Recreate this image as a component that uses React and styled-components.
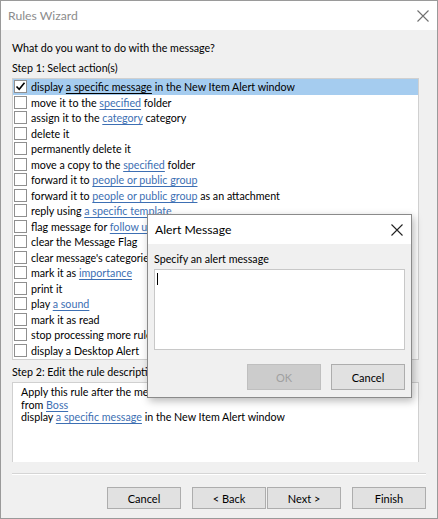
import styled, { createGlobalStyle } from "styled-components"

const GlobalStyle = createGlobalStyle`
  body {
    margin: 0;
    background: #ffffff;
    font-family: Lato, "Noto Sans", sans-serif;
  }
`

const Window = styled.div`
  position: relative;
  width: 438px;
  height: 519px;
  box-sizing: border-box;
  border: 1px solid #9a9a9a;
  background: #f0f0f0;
  display: flex;
  flex-direction: column;
  overflow: hidden;
  font-size: 10.7px;
  color: #000;
`

const TitleBar = styled.div`
  height: 29px;
  flex: none;
  background: #fff;
  display: flex;
  align-items: center;
  justify-content: space-between;
  padding: 0 8px 0 7px;
  font-size: 12.2px;
  color: ${p => (p.$active ? "#000" : "#8c8c8c")};
`

const CloseBtn = styled.svg`
  width: ${p => p.$size || 12}px;
  height: ${p => p.$size || 12}px;
  flex: none;
`

const Body = styled.div`
  flex: 1;
  display: flex;
  flex-direction: column;
  padding: 10px 11px 0 11px;
`

const Label = styled.div`
  height: 16px;
  line-height: 16px;
  margin-top: ${p => p.$mt || 0}px;
  white-space: nowrap;
`

const ListBox = styled.div`
  margin-top: 2px;
  margin-right: 7px;
  height: 282px;
  box-sizing: border-box;
  border: 1px solid #d0d0d0;
  background: #fff;
  display: flex;
  flex-direction: column;
`

const Row = styled.div`
  height: 15.5px;
  flex: none;
  display: flex;
  align-items: center;
  gap: 4px;
  padding-left: 1px;
  white-space: nowrap;
  background: ${p => (p.$selected ? "#a5ccef" : "transparent")};
`

const Box = styled.span`
  width: 13px;
  height: 13px;
  box-sizing: border-box;
  border: 1px solid #8f8f8f;
  background: #fff;
  flex: none;
  display: flex;
  align-items: center;
  justify-content: center;
`

const Link = styled.span`
  color: ${p => (p.$plain ? "#000" : "#3d6fb3")};
  text-decoration: underline;
  text-underline-offset: 1.5px;
`

const DescBox = styled.div`
  margin-top: 2px;
  margin-right: 7px;
  height: 80px;
  box-sizing: border-box;
  border: 1px solid #d0d0d0;
  border-bottom: none;
  background: #fff;
  padding: 3px 0 0 8px;
  line-height: 12.5px;
`

const Separator = styled.div`
  margin-top: 11px;
  height: 0;
  border-top: 1px solid #d5d5d5;
  border-bottom: 1px solid #fff;
`

const ButtonRow = styled.div`
  margin-top: 12px;
  display: flex;
  justify-content: flex-end;
`

const Button = styled.button`
  width: 74px;
  height: ${p => p.$h || 22}px;
  margin-left: ${p => p.$gap ?? 11}px;
  box-sizing: border-box;
  border: 1px solid ${p => (p.disabled ? "#bfbfbf" : "#adadad")};
  background: ${p => (p.disabled ? "#cccccc" : "#e1e1e1")};
  color: ${p => (p.disabled ? "#a0a0a0" : "#000")};
  font-family: inherit;
  font-size: 11px;
  padding: 0;
`

const Dialog = styled.div`
  position: absolute;
  left: 146px;
  top: 213px;
  width: 265px;
  height: 184px;
  box-sizing: border-box;
  border: 1px solid #8a8a8a;
  background: #f0f0f0;
  box-shadow: 2px 3px 8px rgba(0, 0, 0, 0.28);
  display: flex;
  flex-direction: column;
`

const DialogBody = styled.div`
  flex: 1;
  display: flex;
  flex-direction: column;
  padding: 7px 6px 0 6px;
`

const TextArea = styled.div`
  margin-top: 2px;
  height: 81px;
  box-sizing: border-box;
  border: 1px solid #c8c8c8;
  background: #fff;
  padding: 3px 0 0 2px;
`

const Caret = styled.div`
  width: 1px;
  height: 12px;
  background: #000;
`

const DialogButtons = styled.div`
  margin-top: 14px;
  display: flex;
  justify-content: flex-end;
`

const X = ({ size, color }) => (
  <CloseBtn $size={size} viewBox="0 0 12 12">
    <path d="M0.5 0.5 L11.5 11.5 M11.5 0.5 L0.5 11.5" stroke={color} strokeWidth="1.1" fill="none" />
  </CloseBtn>
)

const actions = [
  ["display ", ["a specific message"], " in the New Item Alert window"],
  ["move it to the ", ["specified"], " folder"],
  ["assign it to the ", ["category"], " category"],
  ["delete it"],
  ["permanently delete it"],
  ["move a copy to the ", ["specified"], " folder"],
  ["forward it to ", ["people or public group"]],
  ["forward it to ", ["people or public group"], " as an attachment"],
  ["reply using ", ["a specific template"]],
  ["flag message for ", ["follow up at this time"]],
  ["clear the Message Flag"],
  ["clear message's categories"],
  ["mark it as ", ["importance"]],
  ["print it"],
  ["play ", ["a sound"]],
  ["mark it as read"],
  ["stop processing more rules"],
  ["display a Desktop Alert"],
]

const renderParts = (parts, plain) =>
  parts.map((p, i) => (Array.isArray(p) ? <Link key={i} $plain={plain}>{p[0]}</Link> : <span key={i}>{p}</span>))

export default function App() {
  return (
    <>
      <GlobalStyle />
      <Window>
        <TitleBar>
          <span>Rules Wizard</span>
          <X size={12} color="#707070" />
        </TitleBar>
        <Body>
          <Label>What do you want to do with the message?</Label>
          <Label $mt={4}>Step 1: Select action(s)</Label>
          <ListBox>
            {actions.map((a, i) => (
              <Row key={i} $selected={i === 0}>
                <Box>
                  {i === 0 && (
                    <svg width="11" height="11" viewBox="0 0 11 11">
                      <path d="M1.5 5.5 L4.2 8.3 L9.5 1.8" stroke="#000" strokeWidth="1.6" fill="none" />
                    </svg>
                  )}
                </Box>
                <span>{renderParts(a, i === 0)}</span>
              </Row>
            ))}
          </ListBox>
          <Label $mt={4}>Step 2: Edit the rule description (click an underlined value)</Label>
          <DescBox>
            <div>Apply this rule after the message arrives</div>
            <div>from <Link>Boss</Link></div>
            <div>display <Link>a specific message</Link> in the New Item Alert window</div>
          </DescBox>
          <Separator />
          <ButtonRow>
            <Button>Cancel</Button>
            <Button>&lt; Back</Button>
            <Button $gap={1}>Next &gt;</Button>
            <Button>Finish</Button>
          </ButtonRow>
        </Body>
        <Dialog>
          <TitleBar $active>
            <span>Alert Message</span>
            <X size={12} color="#222" />
          </TitleBar>
          <DialogBody>
            <Label>Specify an alert message</Label>
            <TextArea>
              <Caret />
            </TextArea>
            <DialogButtons>
              <Button $h={26} disabled>OK</Button>
              <Button $h={26} $gap={10}>Cancel</Button>
            </DialogButtons>
          </DialogBody>
        </Dialog>
      </Window>
    </>
  )
}
